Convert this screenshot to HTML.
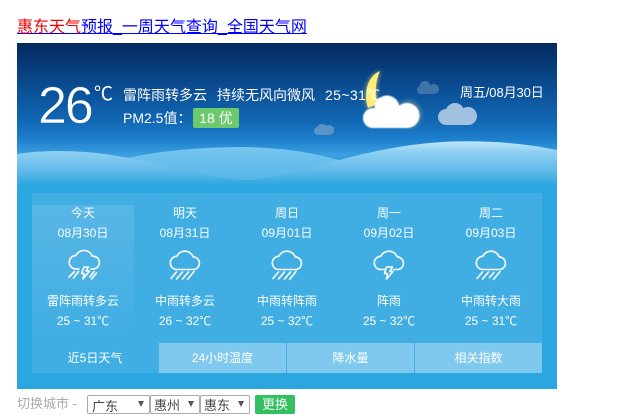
<!DOCTYPE html>
<html>
<head>
<meta charset="utf-8">
<style>
html,body{margin:0;padding:0;background:#fff;width:619px;height:419px;overflow:hidden}
body{font-family:"Liberation Sans","WenQuanYi Zen Hei","Noto Sans CJK SC",sans-serif;position:relative}
.a{position:absolute;white-space:nowrap}
.w{color:#fff;font-size:12px;line-height:16px;text-align:center;width:102px}
.tab{position:absolute;top:343px;height:30px;line-height:30px;text-align:center;color:#fff;font-size:12px;background:#80c9ee}
.sel{position:absolute;top:395px;height:19px;box-sizing:border-box;border:1px solid #aaa;border-radius:2px;background:#fff;color:#444;font-size:13px;line-height:19px;padding-left:3px;overflow:hidden}
.sel i{position:absolute;right:5px;top:5px;width:0;height:0;border-left:3.5px solid transparent;border-right:3.5px solid transparent;border-top:6px solid #555}
svg{position:absolute;left:0;top:0}
</style>
</head>
<body>
<div class="a" style="left:17px;top:18px;font-size:16px;line-height:20px;color:#00f;text-decoration:underline"><span style="color:#e00">惠东天气</span>预报_一周天气查询_全国天气网</div>

<svg width="619" height="419" viewBox="0 0 619 419">
<defs>
<linearGradient id="sky" x1="0" y1="0" x2="0" y2="1">
<stop offset="0" stop-color="#03295f"/><stop offset=".42" stop-color="#0b4f95"/><stop offset=".7" stop-color="#1268b5"/><stop offset=".85" stop-color="#1c7ecb"/><stop offset="1" stop-color="#3a9fe0"/>
</linearGradient>
<linearGradient id="h1" gradientUnits="userSpaceOnUse" x1="0" y1="141" x2="0" y2="186">
<stop offset="0" stop-color="#c0e6f8"/><stop offset=".25" stop-color="#8ccff1"/><stop offset=".65" stop-color="#62bbe9"/><stop offset="1" stop-color="#2ba6e0"/>
</linearGradient>
<linearGradient id="h2" gradientUnits="userSpaceOnUse" x1="0" y1="147" x2="0" y2="180">
<stop offset="0" stop-color="#78c6ee"/><stop offset="1" stop-color="#56b6e8"/>
</linearGradient>
<linearGradient id="today" x1="0" y1="0" x2="0" y2="1">
<stop offset="0" stop-color="#58b6e6"/><stop offset="1" stop-color="#42aee3"/>
</linearGradient>
<filter id="glow" x="-60%" y="-40%" width="220%" height="180%"><feGaussianBlur stdDeviation="2.5"/></filter>
<filter id="soft" x="-10%" y="-10%" width="120%" height="120%"><feGaussianBlur stdDeviation=".4"/></filter>
</defs>
<rect x="17" y="43" width="540" height="346" fill="#2ba6e0"/>
<rect x="17" y="43" width="540" height="112" fill="url(#sky)"/>
<rect x="17" y="154" width="540" height="32" fill="#3a9fe0"/>
<!-- hills -->
<path d="M127 158 C165 150 205 147 245 147 C285 148 315 153 345 162 L345 180 L127 180 Z" fill="url(#h2)"/>
<path d="M17 154 C35 151 60 150 85 152 C125 155 160 165 195 173 C220 178 245 181 270 183 L270 186 L17 186 Z" fill="url(#h1)"/>
<path d="M215 186 C250 180 280 176 300 171 C330 163 375 148 430 143 C470 139 520 142 557 150 L557 186 Z" fill="url(#h1)"/>
<rect x="17" y="185" width="540" height="8" fill="#2ba6e0"/>
<!-- small clouds -->
<g fill="#5a93c6"><circle cx="322" cy="129.500" r="5.500"/><circle cx="329" cy="130" r="5"/><circle cx="318" cy="131" r="4"/><rect x="318" y="129" width="11" height="6"/></g>
<g fill="#3f74a8"><circle cx="425" cy="86.500" r="5.500"/><circle cx="434" cy="89" r="5"/><circle cx="421" cy="90" r="4"/><rect x="421" y="88" width="13" height="6"/></g>
<g fill="#a1c1de"><circle cx="455" cy="112.500" r="9.500"/><circle cx="468" cy="116" r="9"/><circle cx="446" cy="117" r="8"/><rect x="446" y="114" width="22" height="11"/></g>
<!-- moon -->
<path d="M380 71 C368 76 363 92 368 108 L378 104 C374 92 376 80 380 71 Z" fill="#fff27a" filter="url(#glow)" opacity=".8"/>
<path d="M380 71 C368 76 363 92 368 108 L378 104 C374 92 376 80 380 71 Z" fill="#fdec78"/>
<circle cx="408" cy="114" r="13" fill="#fff27a" filter="url(#glow)" opacity=".35"/>
<!-- main cloud -->
<g fill="#fff" filter="url(#soft)">
<circle cx="387" cy="108" r="12.500"/><circle cx="407" cy="115.500" r="12.500"/><circle cx="373" cy="118" r="10"/><rect x="373" y="110" width="34" height="18"/>
</g>
<!-- forecast panel -->
<rect x="32" y="193" width="510" height="180" fill="#40ade3"/>
<rect x="32" y="205" width="102" height="125" fill="url(#today)"/>
<g fill="none" stroke="#fff" stroke-width="1.600" stroke-linecap="round" stroke-linejoin="round">
<g transform="translate(69,248)">
<path d="M10 21 H7 A6.600 6.600 0 0 1 6.800 7.600 A9 9 0 0 1 23.300 8.200 A6.400 6.400 0 0 1 24.600 21 H22"/>
<path d="M15 19 H19.500 L17 23 H20.500 L14 31 L15.300 25.500 H12.500 Z"/>
<path d="M5.500 23.500 L0 29 M9.500 23.500 L4.500 30 M25 23.500 L21 29 M27.500 25 L22.500 31"/>
</g>
<g transform="translate(170,249)">
<path d="M7 20.500 A6.600 6.600 0 0 1 6.800 7.300 A9 9 0 0 1 23.300 7.900 A6.400 6.400 0 0 1 24.600 20.500 Z"/>
<path d="M6.500 23 L1 29.500 M12.500 23 L6.500 30 M18.500 23 L12.500 30 M24 22.500 L17.500 30.500"/>
</g>
<g transform="translate(272,249)">
<path d="M7 20.500 A6.600 6.600 0 0 1 6.800 7.300 A9 9 0 0 1 23.300 7.900 A6.400 6.400 0 0 1 24.600 20.500 Z"/>
<path d="M6.500 23 L1 29.500 M12.500 23 L6.500 30 M18.500 23 L12.500 30 M24 22.500 L17.500 30.500"/>
</g>
<g transform="translate(374,249)">
<path d="M10.500 20.500 H7 A6.600 6.600 0 0 1 6.800 7.300 A9 9 0 0 1 23.300 7.900 A6.400 6.400 0 0 1 24.600 20.500 H19.500"/>
<path d="M12.500 18 H18.500 L15.800 22.500 H19 L12.500 30 L13.500 24.500 H10.500 Z"/>
</g>
<g transform="translate(476,249)">
<path d="M7 20.500 A6.600 6.600 0 0 1 6.800 7.300 A9 9 0 0 1 23.300 7.900 A6.400 6.400 0 0 1 24.600 20.500 Z"/>
<path d="M6.500 23 L1 29.500 M12.500 23 L6.500 30 M18 23.500 L13.500 28.500 M24 22.500 L17.500 30.500"/>
</g>
</g>
</svg>

<div class="a" style="left:38px;top:76px;font-size:52px;line-height:60px;color:#fff;letter-spacing:-2px;-webkit-text-stroke:.5px #0e5aa0">26</div>
<div class="a" style="left:94px;top:83px;font-size:19px;line-height:24px;color:#fff">℃</div>
<div class="a" style="left:123px;top:86px;font-size:14px;line-height:18px;color:#fff">雷阵雨转多云</div>
<div class="a" style="left:217px;top:86px;font-size:14px;line-height:18px;color:#fff">持续无风向微风</div>
<div class="a" style="left:325px;top:86px;font-size:14px;line-height:18px;color:#fff;letter-spacing:.4px">25~31℃</div>
<div class="a" style="left:123px;top:109px;font-size:14px;line-height:18px;color:#fff">PM2.5值：</div>
<div class="a" style="left:193px;top:108px;width:46px;height:20px;line-height:20px;background:#6cc96c;border-radius:2px;color:#fff;font-size:14px;text-align:center">18 优</div>
<div class="a" style="left:460px;top:84px;font-size:13px;line-height:18px;color:#fff;letter-spacing:-.1px">周五/08月30日</div>

<div class="a w" style="left:32px;top:205px">今天</div>
<div class="a w" style="left:32px;top:225px">08月30日</div>
<div class="a w" style="left:32px;top:293px">雷阵雨转多云</div>
<div class="a w" style="left:32px;top:313px">25 ~ 31℃</div>

<div class="a w" style="left:134px;top:205px">明天</div>
<div class="a w" style="left:134px;top:225px">08月31日</div>
<div class="a w" style="left:134px;top:293px">中雨转多云</div>
<div class="a w" style="left:134px;top:313px">26 ~ 32℃</div>

<div class="a w" style="left:236px;top:205px">周日</div>
<div class="a w" style="left:236px;top:225px">09月01日</div>
<div class="a w" style="left:236px;top:293px">中雨转阵雨</div>
<div class="a w" style="left:236px;top:313px">25 ~ 32℃</div>

<div class="a w" style="left:338px;top:205px">周一</div>
<div class="a w" style="left:338px;top:225px">09月02日</div>
<div class="a w" style="left:338px;top:293px">阵雨</div>
<div class="a w" style="left:338px;top:313px">25 ~ 32℃</div>

<div class="a w" style="left:440px;top:205px">周二</div>
<div class="a w" style="left:440px;top:225px">09月03日</div>
<div class="a w" style="left:440px;top:293px">中雨转大雨</div>
<div class="a w" style="left:440px;top:313px">25 ~ 31℃</div>

<div class="tab" style="left:32px;width:126px;background:none">近5日天气</div>
<div class="tab" style="left:159px;width:127px">24小时温度</div>
<div class="tab" style="left:287px;width:127px">降水量</div>
<div class="tab" style="left:415px;width:127px">相关指数</div>

<div class="a" style="left:17px;top:395px;font-size:13px;line-height:18px;color:#aaa">切换城市 -</div>
<div class="sel" style="left:87px;width:63px;padding-left:4px;line-height:22px">广东<i></i></div>
<div class="sel" style="left:150px;width:50px">惠州<i></i></div>
<div class="sel" style="left:200px;width:50px">惠东<i></i></div>
<div class="a" style="left:255px;top:395px;width:40px;height:19px;line-height:20px;background:#33c05f;border-radius:2px;color:#fff;font-size:13px;text-align:center">更换</div>
</body>
</html>
